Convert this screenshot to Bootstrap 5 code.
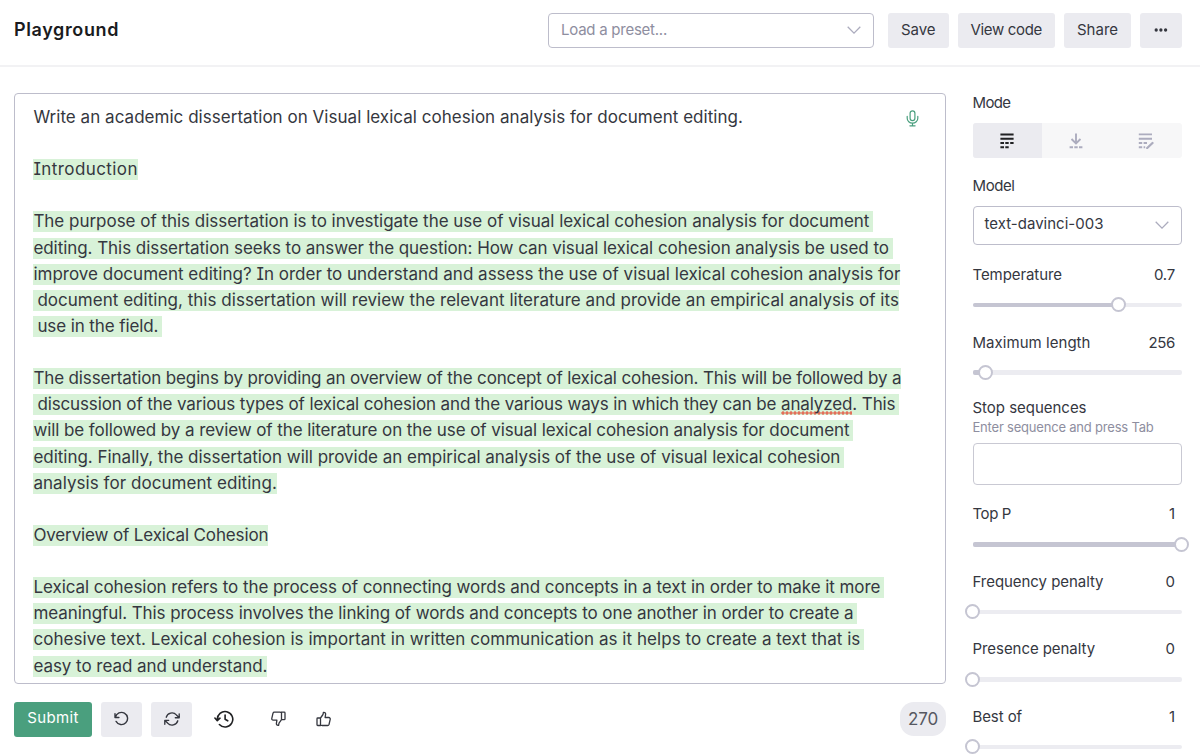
<!DOCTYPE html>
<html lang="en">
<head>
<meta charset="utf-8">
<meta name="viewport" content="width=device-width, initial-scale=1">
<title>Playground</title>
<link href="https://cdn.jsdelivr.net/npm/bootstrap@5.3.0/dist/css/bootstrap.min.css" rel="stylesheet">
<style>
body{font-family:Inter,"Liberation Sans",sans-serif;font-feature-settings:"cv08";font-size:15px;line-height:20px;color:#35373f;background:#fff;overflow:hidden;height:756px}
[data-w]{white-space:nowrap}
svg{display:block;flex:none}
.topbar{height:67px;border-bottom:2px solid #f2f2f4;padding:13px 18.5px 0 14px}
.page-title{font-size:18px;font-weight:600;line-height:24px;color:#1a1b20;margin-top:5px}
.soft-btn{height:35px;padding:0 0 2px;border:0;border-radius:3px;background:#ebebf0;color:#35373f;font-size:15px;line-height:20px}
.soft-btn svg{margin:1px auto 0}
.picker{border:1px solid #bdbdcb;border-radius:4px;padding:0 12px;background:#fff}
.picker span{margin-top:-2px}
.picker svg{margin-top:-1px}
.preset{width:326px;height:35px;color:#8e8ea0;margin-right:5px}
.workspace{padding:26px 18.5px 0 14px;gap:26.5px}
.editor{width:932px;height:591px;border:1px solid #bdbdcb;border-radius:4px;padding:10.4px 18px 0 18.4px;font-size:17px;color:#353740}
.mic{top:16px;right:26px}
.ln{height:26.13px;display:flex;align-items:center}
.ln>span{display:block;height:21px;line-height:20px;white-space:pre}
.gen>span{background:#d8f2d8}
.lead-sp{padding-left:4px}
.trail-sp{padding-right:4px}
.misspelt{display:inline-block;height:21px;background:radial-gradient(circle,#e2705a 1.4px,transparent 1.9px) 0 100%/4px 4px repeat-x}
.tools{margin-top:17.5px;height:35px}
.submit{width:78px;height:35px;padding:0 0 2px;border:0;border-radius:3px;background:#4a9f7e;color:#fff;font-size:15px;line-height:20px}
.counter{width:46px;height:34px;border-radius:14px;background:#ebebf0;color:#565861;font-size:17px}
.sidebar{width:209px}
.modes{height:35px;margin:10px 0 17.6px;background:#f7f7f8;border-radius:3px;overflow:hidden;color:#acacbe}
.modes>div{display:flex;align-items:center;justify-content:center}
.modes .on{background:#ebebf0;color:#202123}
.model{height:39px;margin:10.4px 0 20.1px}
.param{margin-bottom:19.5px}
.track{height:16px;margin-top:12px;position:relative;display:flex;align-items:center}
.track .bar{height:4.5px;width:100%;background:#ececf1;border-radius:2px}
.track .fill{height:100%;background:#c5c5d2;border-radius:2px}
.knob{position:absolute;top:.2px;width:15px;height:15px;margin-left:-7.5px;border:2px solid #c5c5d2;border-radius:50%;background:#fff}
.val{margin-right:6.5px}
.hint{font-size:13px;line-height:18px;color:#8e8ea0}
.stopbox{height:42px;margin:7.4px 0 19.5px;border:1px solid #c9c9d3;border-radius:4px}
</style>
</head>
<body>
<header class="topbar d-flex justify-content-between align-items-start">
  <h1 class="page-title mb-0"><span data-w="105">Playground</span></h1>
  <div class="d-flex" style="gap:9px">
    <div class="picker preset d-flex align-items-center justify-content-between">
      <span data-w="106">Load a preset...</span>
      <svg width="14" height="8" viewBox="0 0 14 8" fill="none" stroke="#acacbe" stroke-width="1.3"><path d="M.7.8 7 7.1 13.3.8"/></svg>
    </div>
    <button class="btn soft-btn" style="width:60.5px"><span data-w="34.5">Save</span></button>
    <button class="btn soft-btn" style="width:97.5px"><span data-w="71.5">View code</span></button>
    <button class="btn soft-btn" style="width:67px"><span data-w="41">Share</span></button>
    <button class="btn soft-btn" style="width:41.5px" aria-label="More"><svg width="14" height="4" viewBox="0 0 14 4" fill="#35373f"><circle cx="2.2" cy="2" r="1.65"/><circle cx="6.9" cy="2" r="1.65"/><circle cx="11.6" cy="2" r="1.65"/></svg></button>
  </div>
</header>
<main class="workspace d-flex">
  <section>
    <div class="editor position-relative">
      <svg class="mic position-absolute" width="13" height="17" viewBox="0 0 13 17" fill="none" stroke="#4a9f7e" stroke-width="1.2" stroke-linecap="round"><rect x="4.1" y=".8" width="4.8" height="9.8" rx="2.4"/><path d="M1.2 6.3v1.9a5.3 5 0 0 0 10.6 0V6.3M6.5 13.2v2.5M3.9 15.8h5.2"/></svg>
      <div class="ln"><span data-w="709.5">Write an academic dissertation on Visual lexical cohesion analysis for document editing.</span></div>
      <div class="ln"></div>
      <div class="ln gen"><span data-w="104.5">Introduction</span></div>
      <div class="ln"></div>
      <div class="ln gen"><span class="trail-sp" data-w="840">The purpose of this dissertation is to investigate the use of visual lexical cohesion analysis for document</span></div>
      <div class="ln gen"><span class="trail-sp" data-w="859.5">editing. This dissertation seeks to answer the question: How can visual lexical cohesion analysis be used to</span></div>
      <div class="ln gen"><span data-w="867">improve document editing? In order to understand and assess the use of visual lexical cohesion analysis for</span></div>
      <div class="ln gen"><span class="lead-sp" data-w="865.5">document editing, this dissertation will review the relevant literature and provide an empirical analysis of its</span></div>
      <div class="ln gen"><span class="lead-sp trail-sp" data-w="129">use in the field.</span></div>
      <div class="ln"></div>
      <div class="ln gen"><span data-w="868">The dissertation begins by providing an overview of the concept of lexical cohesion. This will be followed by a</span></div>
      <div class="ln gen"><span class="lead-sp trail-sp" data-w="866">discussion of the various types of lexical cohesion and the various ways in which they can be <span class="misspelt">analyzed</span>. This</span></div>
      <div class="ln gen"><span class="trail-sp" data-w="820">will be followed by a review of the literature on the use of visual lexical cohesion analysis for document</span></div>
      <div class="ln gen"><span class="trail-sp" data-w="811">editing. Finally, the dissertation will provide an empirical analysis of the use of visual lexical cohesion</span></div>
      <div class="ln gen"><span data-w="243.5">analysis for document editing.</span></div>
      <div class="ln"></div>
      <div class="ln gen"><span data-w="235">Overview of Lexical Cohesion</span></div>
      <div class="ln"></div>
      <div class="ln gen"><span class="trail-sp" data-w="851">Lexical cohesion refers to the process of connecting words and concepts in a text in order to make it more</span></div>
      <div class="ln gen"><span class="trail-sp" data-w="824">meaningful. This process involves the linking of words and concepts to one another in order to create a</span></div>
      <div class="ln gen"><span class="trail-sp" data-w="831">cohesive text. Lexical cohesion is important in written communication as it helps to create a text that is</span></div>
      <div class="ln gen"><span data-w="234">easy to read and understand.</span></div>
    </div>
    <div class="tools d-flex align-items-center">
      <button class="btn submit"><span data-w="51.5">Submit</span></button>
      <button class="btn soft-btn" style="width:41.5px;margin-left:8.8px" aria-label="Undo"><svg width="16" height="16" viewBox="0 0 16 16" fill="none" stroke="#35373f" stroke-width="1.4" stroke-linecap="round" stroke-linejoin="round"><path d="M1 2.6v3.9h3.9M1.5 6.2a6.1 6.1 0 1 1 .6 4.2"/></svg></button>
      <button class="btn soft-btn" style="width:41.5px;margin-left:8.7px" aria-label="Regenerate"><svg width="16" height="16" viewBox="0 0 16 16" fill="none" stroke="#35373f" stroke-width="1.35" stroke-linecap="round" stroke-linejoin="round"><path d="M15.2 2.8v3.9h-3.9M15 6.4 12.4 3.9A6 6 0 0 0 2.2 6.2M.8 13.2V9.3h3.9M1 9.6l2.6 2.5A6 6 0 0 0 13.8 9.8"/></svg></button>
      <svg style="margin-left:21.5px" width="20" height="18" viewBox="0 0 20 18" fill="none" stroke="#202123" stroke-width="1.6" stroke-linecap="round" stroke-linejoin="round"><path d="m.9 8 2.4 2.6L6 8.2M3.4 9.9a7.7 7.7 0 1 1 2 4.6M11.1 5v4.3l2.6 1.5"/></svg>
      <svg style="margin-left:37px" width="15" height="16" viewBox="0 0 15 16" fill="none" stroke="#35373f" stroke-width="1.3" stroke-linejoin="round"><path d="M10.5 8.7V1.2h2.7a.8.8 0 0 1 .8.8v5.9a.8.8 0 0 1-.8.8zM10.5 1.7 9 1.2H3.4c-.7 0-1.2.4-1.4 1L.8 7.4c-.2 1 .4 1.8 1.4 1.8h3.7l-.5 3.2c-.1 1.1.5 1.9 1.7 1.9h.5l.4-2.1 2.5-3.5"/></svg>
      <svg style="margin-left:30.5px" width="15" height="16" viewBox="0 0 15 16" fill="none" stroke="#35373f" stroke-width="1.3" stroke-linejoin="round"><path d="M4.5 7v7.5H1.8a.8.8 0 0 1-.8-.8V7.8A.8.8 0 0 1 1.8 7zM4.5 14l1.5.5h5.6c.7 0 1.2-.4 1.4-1l1.2-5.2c.2-1-.4-1.8-1.4-1.8H9.1l.5-3.2c.1-1.1-.5-1.9-1.7-1.9h-.5L7 3.5 4.5 7"/></svg>
      <div class="counter ms-auto d-flex align-items-center justify-content-center"><span data-w="30">270</span></div>
    </div>
  </section>
  <aside class="sidebar">
    <div><span data-w="38">Mode</span></div>
    <div class="modes d-flex">
      <div class="on" style="width:69.5px"><svg width="14" height="16" viewBox="0 0 14 16" fill="none" stroke="currentColor" stroke-width="2"><path d="M.4 1.4h13.2M.4 5.7h13.2M.4 10H4M5.3 10h3.4M10.2 10h3.4M.4 14.3H4M5.3 14.3h3.4"/></svg></div>
      <div class="flex-fill"><svg width="14" height="16" viewBox="0 0 14 16" fill="none" stroke="currentColor" stroke-width="1.9"><path d="M7 .5v9.5M2.5 6 7 10.4 11.5 6M.6 14.3H4M5.3 14.3h3.4M10 14.3h3.4"/></svg></div>
      <div class="flex-fill"><svg width="16" height="16" viewBox="0 0 16 16" fill="none" stroke="currentColor" stroke-width="1.9"><path d="M.8 1.4H14M.8 5.7H14M.8 10h3.4M5.6 10H9M.8 14.3h3.4M5.6 14.3h1.6"/><path d="m9.2 15 5.3-5" stroke-width="2.3" stroke-linecap="round"/></svg></div>
    </div>
    <div><span data-w="42">Model</span></div>
    <div class="picker model d-flex align-items-center justify-content-between" style="padding-left:11px">
      <span data-w="119">text-davinci-003</span>
      <svg width="14" height="8" viewBox="0 0 14 8" fill="none" stroke="#acacbe" stroke-width="1.3"><path d="M.7.8 7 7.1 13.3.8"/></svg>
    </div>
    <div class="param">
      <div class="d-flex justify-content-between"><span data-w="89.5">Temperature</span><span class="val" data-w="21">0.7</span></div>
      <div class="track"><div class="bar"><div class="fill" style="width:70%"></div></div><div class="knob" style="left:70%"></div></div>
    </div>
    <div class="param" style="margin-bottom:17px">
      <div class="d-flex justify-content-between"><span data-w="118">Maximum length</span><span class="val" data-w="26.5">256</span></div>
      <div class="track"><div class="bar"><div class="fill" style="width:6.2%"></div></div><div class="knob" style="left:6.2%"></div></div>
    </div>
    <div><span data-w="114">Stop sequences</span></div>
    <div class="hint"><span data-w="181">Enter sequence and press Tab</span></div>
    <div class="stopbox"></div>
    <div class="param">
      <div class="d-flex justify-content-between"><span data-w="38.5">Top P</span><span class="val">1</span></div>
      <div class="track"><div class="bar"><div class="fill" style="width:100%"></div></div><div class="knob" style="left:100%"></div></div>
    </div>
    <div class="param">
      <div class="d-flex justify-content-between"><span data-w="131">Frequency penalty</span><span class="val">0</span></div>
      <div class="track"><div class="bar"></div><div class="knob" style="left:0%"></div></div>
    </div>
    <div class="param">
      <div class="d-flex justify-content-between"><span data-w="122.5">Presence penalty</span><span class="val">0</span></div>
      <div class="track"><div class="bar"></div><div class="knob" style="left:0%"></div></div>
    </div>
    <div class="param mb-0">
      <div class="d-flex justify-content-between"><span data-w="49.5">Best of</span><span class="val">1</span></div>
      <div class="track"><div class="bar"></div><div class="knob" style="left:0%"></div></div>
    </div>
  </aside>
</main>
<script src="https://cdn.jsdelivr.net/npm/bootstrap@5.3.0/dist/js/bootstrap.bundle.min.js"></script>
<script>
// Track each run of text so that it fills its measure (data-w, in px, padding included).
document.querySelectorAll('[data-w]').forEach(function (el) {
  el.style.letterSpacing = ((el.dataset.w - el.getBoundingClientRect().width) / el.textContent.length) + 'px';
});
</script>
</body>
</html>
